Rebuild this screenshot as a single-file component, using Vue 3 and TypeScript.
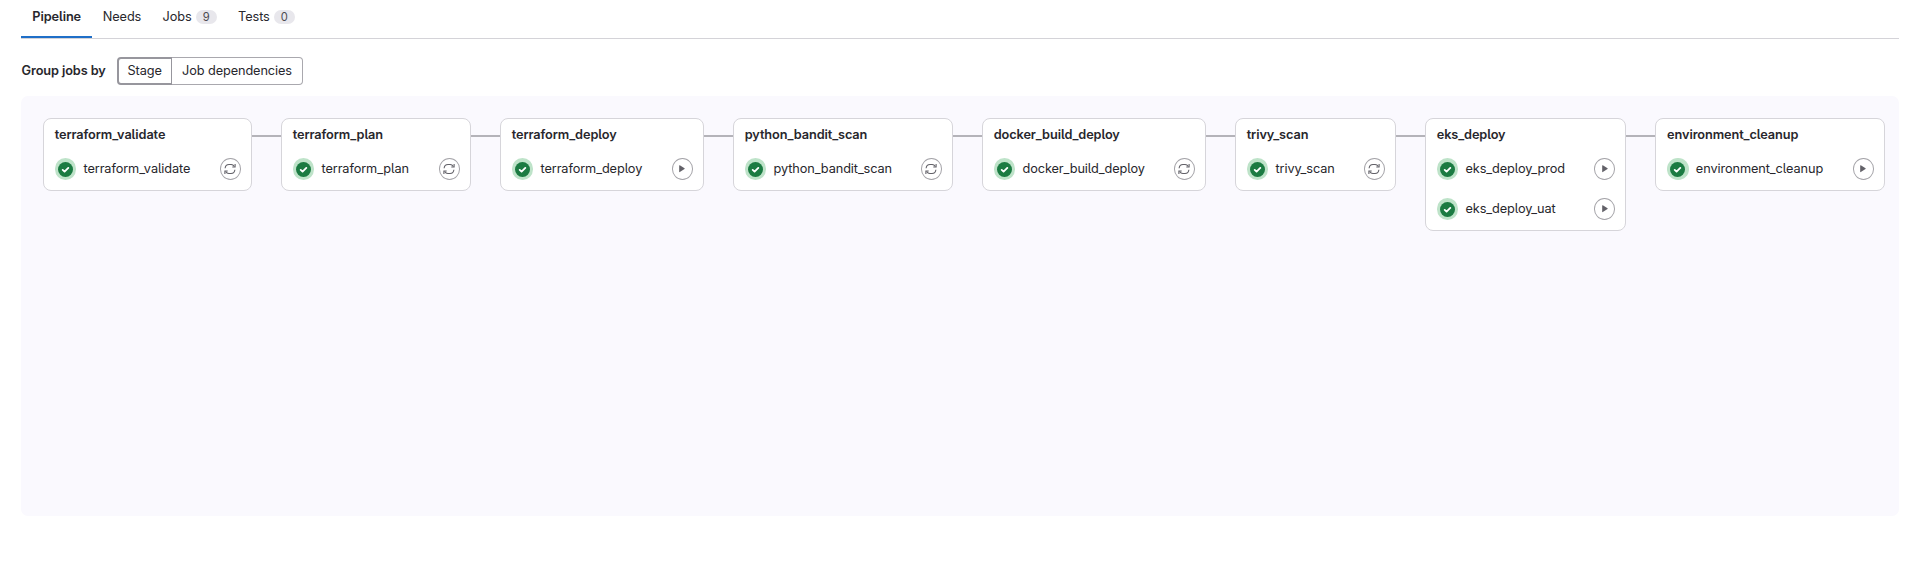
<script setup lang="ts">
type Action = 'retry' | 'play'
interface Job { name: string; action: Action }
interface Stage { name: string; width: number; jobs: Job[] }

const tabs: { label: string; count?: number; active?: boolean }[] = [
  { label: 'Pipeline', active: true },
  { label: 'Needs' },
  { label: 'Jobs', count: 9 },
  { label: 'Tests', count: 0 },
]

const single = (name: string, width: number, action: Action): Stage => ({
  name,
  width,
  jobs: [{ name, action }],
})

const stages: Stage[] = [
  single('terraform_validate', 209, 'retry'),
  single('terraform_plan', 190, 'retry'),
  single('terraform_deploy', 204, 'play'),
  single('python_bandit_scan', 220, 'retry'),
  single('docker_build_deploy', 224, 'retry'),
  single('trivy_scan', 161, 'retry'),
  {
    name: 'eks_deploy',
    width: 201.4,
    jobs: [
      { name: 'eks_deploy_prod', action: 'play' },
      { name: 'eks_deploy_uat', action: 'play' },
    ],
  },
  single('environment_cleanup', 229.6, 'play'),
]
</script>

<template>
  <main class="page">
    <nav class="tabs">
      <a v-for="tab in tabs" :key="tab.label" class="tab" :class="{ active: tab.active }">
        <span>{{ tab.label }}</span>
        <span v-if="tab.count !== undefined" class="badge">{{ tab.count }}</span>
      </a>
    </nav>

    <div class="toolbar">
      <span class="toolbar-label">Group jobs by</span>
      <div class="segmented">
        <button class="segment selected">Stage</button>
        <button class="segment">Job dependencies</button>
      </div>
    </div>

    <section class="graph">
      <template v-for="(stage, i) in stages" :key="stage.name">
        <div v-if="i > 0" class="link"></div>
        <article class="stage" :style="{ width: stage.width + 'px' }">
          <h2 class="stage-name">{{ stage.name }}</h2>
          <div v-for="job in stage.jobs" :key="job.name" class="job">
            <span class="status">
              <svg viewBox="0 0 16 16" width="15" height="15">
                <circle cx="8" cy="8" r="8" fill="#1b7b42" />
                <path d="M5 8.4 7 10.2 11 6.3" fill="none" stroke="#fff" stroke-width="2" stroke-linecap="round" stroke-linejoin="round" />
              </svg>
            </span>
            <span class="job-name">{{ job.name }}</span>
            <button class="action" :aria-label="job.action">
              <svg v-if="job.action === 'retry'" viewBox="0 0 12 12" width="12" height="12" fill="none" stroke="#626168" stroke-width="1.1">
                <path d="M1.1 5.2C1.4 2.9 2.9 1.5 5 1.5H7.2C8.6 1.5 9.6 2.3 10.3 3.5M10.9 6.8C10.6 9.1 9.1 10.5 7 10.5H4.8C3.4 10.5 2.4 9.7 1.7 8.5" />
                <path d="M11.1 1V4H8.3M.9 11V8H3.7" />
              </svg>
              <svg v-else viewBox="0 0 12 12" width="12" height="12">
                <path d="M3.2 2.7Q3.2 2 3.8 2.3L8.5 5.3Q9 5.7 8.5 6.1L3.8 9.1Q3.2 9.4 3.2 8.8Z" fill="#626168" />
              </svg>
            </button>
          </div>
        </article>
      </template>
    </section>
  </main>
</template>

<style>
body { background: #fff; }
</style>

<style scoped>
.page {
  box-sizing: border-box;
  height: 582px;
  padding: 0 21px;
  overflow: hidden;
  color: #28272d;
  font: 400 12.75px/18px Inter, "Liberation Sans", sans-serif;
  font-feature-settings: "cv05";
  letter-spacing: -0.1px;
}
.tabs {
  display: flex;
  box-sizing: border-box;
  height: 39px;
  border-bottom: 1px solid #d4d3d8;
}
.tab {
  display: flex;
  align-items: center;
  gap: 4px;
  box-sizing: border-box;
  height: 38px;
  padding: 0 10.7px 5px;
}
.tab.active {
  padding: 0 11px 3px 11.3px;
  border-bottom: 2px solid #1f6fc8;
  font-weight: 600;
}
.badge {
  min-width: 21px;
  height: 14px;
  border-radius: 7px;
  background: #e8e7ec;
  color: #4c4b51;
  font-size: 11.2px;
  line-height: 14px;
  text-align: center;
}
.toolbar {
  display: flex;
  align-items: center;
  height: 28px;
  margin-top: 18px;
}
.toolbar-label {
  width: 95.5px;
  padding-left: 0.5px;
  font-weight: 600;
}
.segmented {
  display: flex;
}
.segment {
  box-sizing: border-box;
  height: 28px;
  margin: 0;
  padding: 0 10.3px;
  border: 1px solid #a9a8ae;
  border-left: 0;
  border-radius: 0 4px 4px 0;
  background: #fff;
  color: inherit;
  font: inherit;
  font-feature-settings: inherit;
  letter-spacing: -0.11px;
}
.segment.selected {
  padding: 0 9px 0 8.5px;
  border: 2px solid #97969d;
  border-right-width: 1px;
  border-radius: 4px 0 0 4px;
}
.graph {
  display: flex;
  align-items: flex-start;
  box-sizing: border-box;
  height: 420px;
  margin-top: 11px;
  padding: 22px 14px 0 22px;
  border-radius: 7px;
  background: #faf9fe;
}
.link {
  flex: 0 0 29px;
  height: 2px;
  margin-top: 17px;
  background: #b4b3b9;
}
.stage {
  flex: none;
  box-sizing: border-box;
  padding: 7px 10px 9.5px 10.7px;
  border: 1px solid #d6d5da;
  border-radius: 8px;
  background: #fff;
}
.stage-name {
  margin: 0;
  font-size: 12.75px;
  font-weight: 600;
  line-height: 18px;
}
.job {
  display: flex;
  align-items: center;
  height: 22px;
  margin-top: 14px;
}
.job + .job {
  margin-top: 18px;
}
.status {
  display: flex;
  align-items: center;
  justify-content: center;
  width: 21.6px;
  height: 21.6px;
  border-radius: 50%;
  background: #bee3c9;
}
.job-name {
  flex: 1;
  margin-left: 7.2px;
}
.action {
  display: flex;
  align-items: center;
  justify-content: center;
  box-sizing: border-box;
  width: 21.4px;
  height: 22px;
  padding: 0;
  border: 1px solid #a4a3a8;
  border-radius: 50%;
  background: #fff;
}
</style>
